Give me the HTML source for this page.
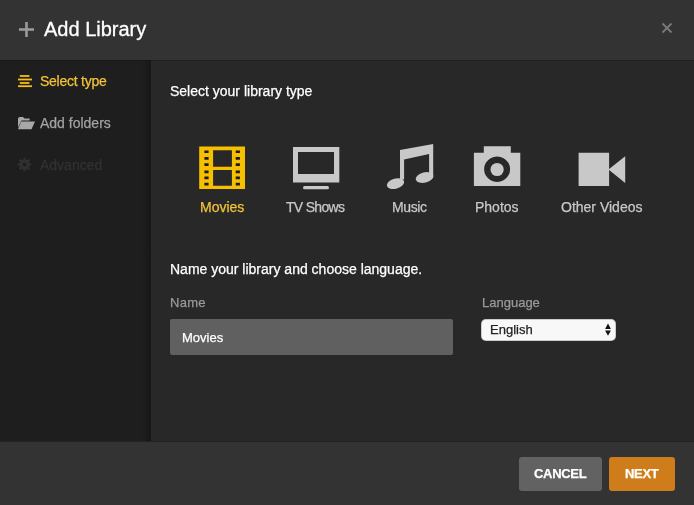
<!DOCTYPE html>
<html><head><meta charset="utf-8">
<style>
*{margin:0;padding:0;box-sizing:border-box}
html,body{width:694px;height:505px;overflow:hidden;background:#282828;font-family:"Liberation Sans",sans-serif}
.abs{position:absolute}
#hdr{left:0;top:0;width:694px;height:60px;background:#333333}
#side{left:0;top:60px;width:151px;height:381px;background:#1e1e1e;border-top:1px solid #191919}
#shadow{left:139px;top:60px;width:12px;height:381px;background:linear-gradient(to right,rgba(0,0,0,0),rgba(0,0,0,0.06) 50%,rgba(0,0,0,0.25))}
#main{left:151px;top:60px;width:543px;height:381px;background:#282828;border-top:1px solid #202020}
#ftr{left:0;top:441px;width:694px;height:64px;background:#333333;border-top:1px solid #222}
.t{position:absolute;white-space:nowrap;line-height:1;will-change:transform;-webkit-text-stroke-width:0.25px}
</style></head>
<body>
<div id="hdr" class="abs"></div>
<div id="side" class="abs"></div>
<div id="main" class="abs"></div>
<div id="shadow" class="abs"></div>
<div id="ftr" class="abs"></div>

<!-- header -->
<svg class="abs" style="left:19px;top:22px" width="15" height="15" viewBox="0 0 15 15"><rect x="6.2" y="0" width="2.6" height="15" fill="#9a9a9a"/><rect x="0" y="6.2" width="15" height="2.6" fill="#9a9a9a"/></svg>
<div class="t" style="left:44px;top:19px;font-size:20px;color:#fff;-webkit-text-stroke:0.3px #fff">Add Library</div>
<svg class="abs" style="left:661px;top:22px" width="12" height="12" viewBox="0 0 12 12"><path d="M1.5 1.5L10.5 10.5M10.5 1.5L1.5 10.5" stroke="#7a7a7a" stroke-width="1.8"/></svg>

<!-- sidebar -->
<svg class="abs" style="left:18px;top:75px" width="14" height="13" viewBox="0 0 14 13"><g fill="#f6be12"><rect x="1.8" y="0.1" width="9.6" height="1.8"/><rect x="0" y="3.6" width="14" height="1.8"/><rect x="1.8" y="7.1" width="9.6" height="1.8"/><rect x="0" y="10.3" width="14" height="1.8"/></g></svg>
<div class="t" style="left:40px;top:74px;font-size:14px;letter-spacing:-0.25px;color:#f2c238">Select type</div>
<svg class="abs" style="left:18px;top:117px" width="17" height="13" viewBox="0 0 17 13"><path d="M0 2 Q0 0 2 0 L5 0 L6.5 1.5 L11.6 1.5 L11.6 3.5 L3.5 3.5 L0 10.5Z" fill="#a8a8a8"/><path d="M3.2 4.5 L17 4.5 L13.5 12.3 L0 12.3Z" fill="#a8a8a8"/></svg>
<div class="t" style="left:40px;top:116px;font-size:14px;color:#a2a2a2">Add folders</div>
<svg class="abs" style="left:17px;top:157px" width="15" height="15" viewBox="-7.5 -7.5 15 15"><g fill="#313131"><circle r="4.7"/><g id="tooth"><path d="M-1.5 -4 L-1 -6.8 L1 -6.8 L1.5 -4Z"/></g><use href="#tooth" transform="rotate(45)"/><use href="#tooth" transform="rotate(90)"/><use href="#tooth" transform="rotate(135)"/><use href="#tooth" transform="rotate(180)"/><use href="#tooth" transform="rotate(225)"/><use href="#tooth" transform="rotate(270)"/><use href="#tooth" transform="rotate(315)"/></g><circle r="1.9" fill="#1d1d1d"/></svg>
<div class="t" style="left:40px;top:158px;font-size:14px;color:#323232">Advanced</div>

<!-- main -->
<div class="t" style="left:170px;top:84px;font-size:14px;color:#fff">Select your library type</div>

<!-- film -->
<svg class="abs" style="left:199px;top:146px" width="47" height="44" viewBox="0 0 47 44">
<path fill="#f6c000" fill-rule="evenodd" d="M0.2 0.5H46V43.1H0.2Z M14.1 4.2H32.9V20.8H14.1Z M14.1 24H32.9V39.8H14.1Z"/>
<path fill="#1c1a14" d="M5.4 4.4h4.2v2.7h-4.2z M5.4 11.1h4.2v2.7h-4.2z M5.4 17.3h4.2v2.7h-4.2z M5.4 24.6h4.2v2.7h-4.2z M5.4 30.6h4.2v2.7h-4.2z M5.4 36.8h4.2v2.7h-4.2z M36.7 4.4h4.2v2.7h-4.2z M36.7 11.1h4.2v2.7h-4.2z M36.7 17.3h4.2v2.7h-4.2z M36.7 24.6h4.2v2.7h-4.2z M36.7 30.6h4.2v2.7h-4.2z M36.7 36.8h4.2v2.7h-4.2z"/>
</svg>
<div class="t" style="left:200px;top:200px;font-size:14px;color:#f2c238">Movies</div>

<!-- tv -->
<svg class="abs" style="left:293px;top:147px" width="47" height="43" viewBox="0 0 47 43">
<path fill="#c8c8c8" fill-rule="evenodd" d="M0 0H46.3V35.4H0Z M5 5H41V27H5Z"/>
<rect x="10" y="39" width="26" height="3.3" rx="1.65" fill="#c8c8c8"/>
</svg>
<div class="t" style="left:286px;top:200px;font-size:14px;letter-spacing:-0.7px;color:#c8c8c8">TV Shows</div>

<!-- music -->
<svg class="abs" style="left:386px;top:143px" width="48" height="47" viewBox="0 0 48 47">
<path fill="#c8c8c8" d="M14 7 L47.2 0.9 L47.2 32 L43.1 32 L43.1 11 L18.1 16.4 L18.1 36.5 L14 36.5Z"/>
<ellipse cx="9.5" cy="40.6" rx="8.8" ry="5" transform="rotate(-15 9.5 40.6)" fill="#c8c8c8"/>
<ellipse cx="38.6" cy="34.5" rx="9" ry="5.2" transform="rotate(-14 38.6 34.5)" fill="#c8c8c8"/>
</svg>
<div class="t" style="left:392px;top:200px;font-size:14px;letter-spacing:-0.4px;color:#c8c8c8">Music</div>

<!-- camera -->
<svg class="abs" style="left:473px;top:146px" width="48" height="41" viewBox="0 0 48 41">
<path fill="#c8c8c8" fill-rule="evenodd" d="M0.9 6.8H10.8V0.3H37.8V6.8H47.3V40.1H0.9Z M24.1 10.5a13 12.7 0 1 0 0.01 0Z"/>
<circle cx="24.1" cy="23.5" r="6.6" fill="#c8c8c8"/>
</svg>
<div class="t" style="left:475px;top:200px;font-size:14px;color:#c8c8c8">Photos</div>

<!-- video -->
<svg class="abs" style="left:578px;top:152px" width="48" height="35" viewBox="0 0 48 35">
<path fill="#c8c8c8" d="M0.6 0.8H31.1V33.9H0.6Z M30.5 17.4 L47.2 4.3 L47.2 31Z"/>
</svg>
<div class="t" style="left:561px;top:200px;font-size:14px;color:#c8c8c8">Other Videos</div>

<div class="t" style="left:170px;top:262px;font-size:14px;color:#fff">Name your library and choose language.</div>
<div class="t" style="left:170px;top:296px;font-size:13px;letter-spacing:0.3px;color:#999">Name</div>
<div class="abs" style="left:170px;top:319px;width:283px;height:36px;background:#606060;border-radius:2px"></div>
<div class="t" style="left:182px;top:331px;font-size:13px;color:#fff">Movies</div>

<div class="t" style="left:482px;top:296px;font-size:13px;color:#999">Language</div>
<div class="abs" style="left:481px;top:319px;width:135px;height:22px;background:#f8f8f8;border-radius:5px;box-shadow:inset 0 0 0 1px rgba(0,0,0,0.18)"></div>
<div class="t" style="left:490px;top:323px;font-size:13px;color:#222">English</div>
<svg class="abs" style="left:604px;top:323px" width="8" height="14" viewBox="0 0 8 14"><path d="M4 0.6L6.9 6H1.1Z M4 12.8L6.9 7.4H1.1Z" fill="#111"/></svg>

<!-- footer buttons -->
<div class="abs" style="left:519px;top:457px;width:83px;height:34px;background:#626262;border-radius:3px"></div>
<div class="t" style="left:534px;top:467px;font-size:13px;font-weight:bold;letter-spacing:-0.3px;color:#fff">CANCEL</div>
<div class="abs" style="left:609px;top:457px;width:66px;height:34px;background:#ce7d1a;border-radius:3px"></div>
<div class="t" style="left:625px;top:467px;font-size:13px;font-weight:bold;letter-spacing:-0.3px;color:#fff">NEXT</div>
</body></html>
